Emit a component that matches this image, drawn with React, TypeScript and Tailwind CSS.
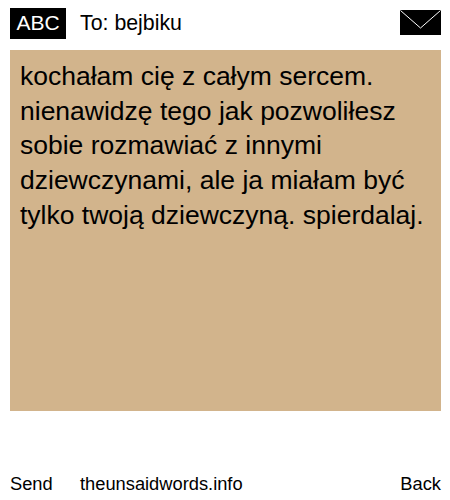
export default function App() {
  return (
    <div className="w-[450px] h-[500px] bg-white text-black font-['Liberation_Sans',Arial,sans-serif] flex flex-col">
      {/* top bar */}
      <header className="flex items-start h-[50px] pt-2 pl-2.5 pr-[9px] shrink-0">
        <span className="bg-black text-white text-[21px] leading-[29px] h-[31px] w-[56px] text-center">ABC</span>
        <span className="ml-[14px] text-[21.33px] leading-[31px]">To: bejbiku</span>
        <svg className="ml-auto mt-[2px]" width="41" height="25" viewBox="0 0 41 25">
          <rect width="41" height="25" fill="#000" />
          <path d="M0.5 0.5 L20.5 18 L40.5 0.5" fill="none" stroke="#fff" strokeWidth="1" />
        </svg>
      </header>

      {/* message */}
      <main className="mx-2.5 w-[431px] h-[361px] bg-[#d2b48c] px-2.5 pt-[9px] shrink-0">
        <p className="text-[26.5px] leading-[34.67px]">
          kochałam cię z całym sercem. nienawidzę tego jak pozwoliłesz sobie rozmawiać z innymi dziewczynami, ale ja miałam być tylko twoją dziewczyną. spierdalaj.
        </p>
      </main>

      {/* soft keys */}
      <footer className="mt-auto flex items-center h-[28px] mb-[2px] pl-2.5 pr-[9px] text-[18.3px]">
        <span className="w-[70px]">Send</span>
        <span>theunsaidwords.info</span>
        <span className="ml-auto">Back</span>
      </footer>
    </div>
  );
}
